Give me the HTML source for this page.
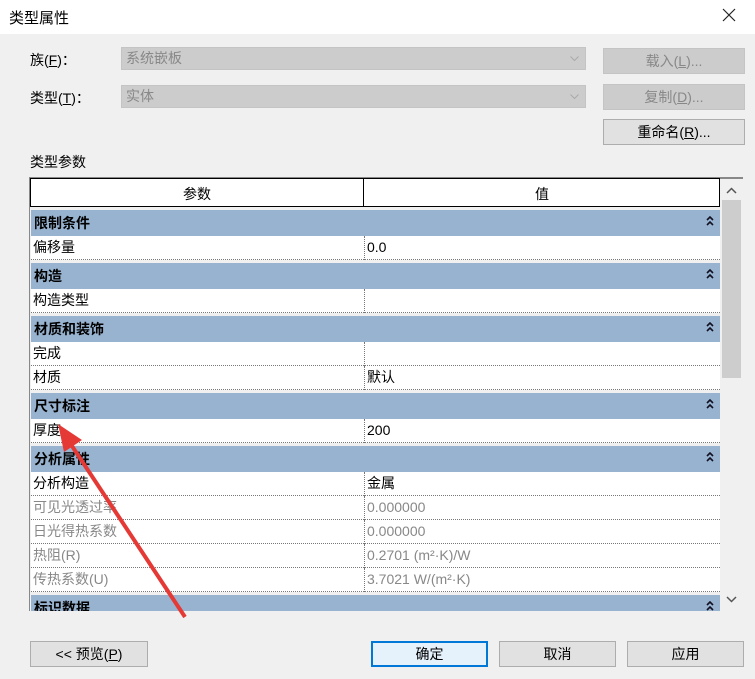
<!DOCTYPE html>
<html><head><meta charset="utf-8"><style>
*{margin:0;padding:0;box-sizing:border-box}
body{width:755px;height:679px;background:#f0f0f0;font-family:"Liberation Sans","Noto Sans CJK SC",sans-serif;font-size:14px;color:#000;position:relative;overflow:hidden}
.a{position:absolute}
.title{left:0;top:0;width:755px;height:34px;background:#fff}
.combo{background:#ccc;border:1px solid #c4c4c4;color:#888;padding-left:4px;line-height:21px;font-size:14px}
.btn{border:1px solid #adadad;background:#e1e1e1;text-align:center;font-size:14px;line-height:24px}
.dis{background:#ccc;border-color:#c4c4c4;color:#888}
.grp{left:31px;width:689px;height:26px;background:#98b3d0;font-weight:bold;padding-left:3px;line-height:26px}
.grp svg{position:absolute;right:6px;top:6px}
.row{left:31px;width:689px;height:24px;background:#fff;border-bottom:1px dotted #777;line-height:23px}
.row span{position:absolute;left:2px}
.row b{position:absolute;left:333px;top:0;height:24px;border-left:1px dotted #777;font-weight:normal;padding-left:2px;width:356px}
.g{color:#888}
</style></head><body>
<div class="a title"></div>
<div class="a" style="left:9px;top:7px;font-size:15px">类型属性</div>
<svg class="a" style="left:722px;top:8px" width="14" height="14"><path d="M1 1L13 13M13 1L1 13" stroke="#222" stroke-width="1.2"/></svg>

<div class="a" style="left:30px;top:50px">族(<u>F</u>)：</div>
<div class="a" style="left:30px;top:88px">类型(<u>T</u>)：</div>
<div class="a combo" style="left:121px;top:47px;width:465px;height:23px">系统嵌板<svg class="a" style="right:6px;top:8px" width="9" height="6"><path d="M0.5 0.5L4.5 4.5L8.5 0.5" stroke="#aaa" fill="none"/></svg></div>
<div class="a combo" style="left:121px;top:85px;width:465px;height:23px">实体<svg class="a" style="right:6px;top:8px" width="9" height="6"><path d="M0.5 0.5L4.5 4.5L8.5 0.5" stroke="#aaa" fill="none"/></svg></div>
<div class="a btn dis" style="left:603px;top:48px;width:142px;height:26px">载入(<u>L</u>)...</div>
<div class="a btn dis" style="left:603px;top:84px;width:142px;height:26px">复制(<u>D</u>)...</div>
<div class="a btn" style="left:603px;top:119px;width:142px;height:26px">重命名(<u>R</u>)...</div>
<div class="a" style="left:30px;top:152px">类型参数</div>

<div class="a" style="left:29px;top:177px;width:714px;height:434px;border-top:2px solid #888;border-left:1px solid #888;background:#f0f0f0"></div>
<div class="a" style="left:30px;top:178px;width:690px;height:29px;border:1px solid #000;background:#fff"></div>
<div class="a" style="left:363px;top:178px;width:1px;height:29px;background:#000"></div>
<div class="a" style="left:183px;top:184px">参数</div>
<div class="a" style="left:535px;top:184px">值</div>
<svg class="a" style="left:726px;top:187px" width="11" height="7"><path d="M1 6L5.5 1.5L10 6" stroke="#555" stroke-width="1.5" fill="none"/></svg>
<div class="a" style="left:722px;top:200px;width:19px;height:178px;background:#cdcdcd"></div>
<svg class="a" style="left:726px;top:596px" width="11" height="7"><path d="M1 1L5.5 5.5L10 1" stroke="#555" stroke-width="1.5" fill="none"/></svg>

<div class="a grp" style="top:210px">限制条件<svg width="8" height="10"><path d="M1 4L4 1L7 4M1 9L4 6L7 9" stroke="#112" stroke-width="1.6" fill="none"/></svg></div>
<div class="a row" style="top:236px"><span>偏移量</span><b>0.0</b></div>
<div class="a grp" style="top:263px">构造<svg width="8" height="10"><path d="M1 4L4 1L7 4M1 9L4 6L7 9" stroke="#112" stroke-width="1.6" fill="none"/></svg></div>
<div class="a row" style="top:289px"><span>构造类型</span><b></b></div>
<div class="a grp" style="top:316px">材质和装饰<svg width="8" height="10"><path d="M1 4L4 1L7 4M1 9L4 6L7 9" stroke="#112" stroke-width="1.6" fill="none"/></svg></div>
<div class="a row" style="top:342px"><span>完成</span><b></b></div>
<div class="a row" style="top:366px"><span>材质</span><b>默认</b></div>
<div class="a grp" style="top:393px">尺寸标注<svg width="8" height="10"><path d="M1 4L4 1L7 4M1 9L4 6L7 9" stroke="#112" stroke-width="1.6" fill="none"/></svg></div>
<div class="a row" style="top:419px"><span>厚度</span><b>200</b></div>
<div class="a grp" style="top:446px">分析属性<svg width="8" height="10"><path d="M1 4L4 1L7 4M1 9L4 6L7 9" stroke="#112" stroke-width="1.6" fill="none"/></svg></div>
<div class="a row" style="top:472px"><span>分析构造</span><b>金属</b></div>
<div class="a row g" style="top:496px"><span>可见光透过率</span><b>0.000000</b></div>
<div class="a row g" style="top:520px"><span>日光得热系数</span><b>0.000000</b></div>
<div class="a row g" style="top:544px"><span>热阻(R)</span><b>0.2701 (m²·K)/W</b></div>
<div class="a row g" style="top:568px"><span>传热系数(U)</span><b>3.7021 W/(m²·K)</b></div>
<div class="a grp" style="top:595px;height:16px;overflow:hidden">标识数据<svg width="8" height="10"><path d="M1 4L4 1L7 4M1 9L4 6L7 9" stroke="#112" stroke-width="1.6" fill="none"/></svg></div>

<svg class="a" style="left:0;top:0" width="755" height="679">
<line x1="185" y1="617" x2="68" y2="440" stroke="#e53935" stroke-width="4"/>
<polygon points="58,424 82,440 64,452" fill="#e53935"/>
</svg>

<div class="a btn" style="left:30px;top:641px;width:118px;height:26px">&lt;&lt; 预览(<u>P</u>)</div>
<div class="a btn" style="left:371px;top:641px;width:117px;height:26px;border:2px solid #0078d7;background:#e5f1fb;line-height:22px">确定</div>
<div class="a btn" style="left:499px;top:641px;width:117px;height:26px">取消</div>
<div class="a btn" style="left:627px;top:641px;width:117px;height:26px">应用</div>
</body></html>
